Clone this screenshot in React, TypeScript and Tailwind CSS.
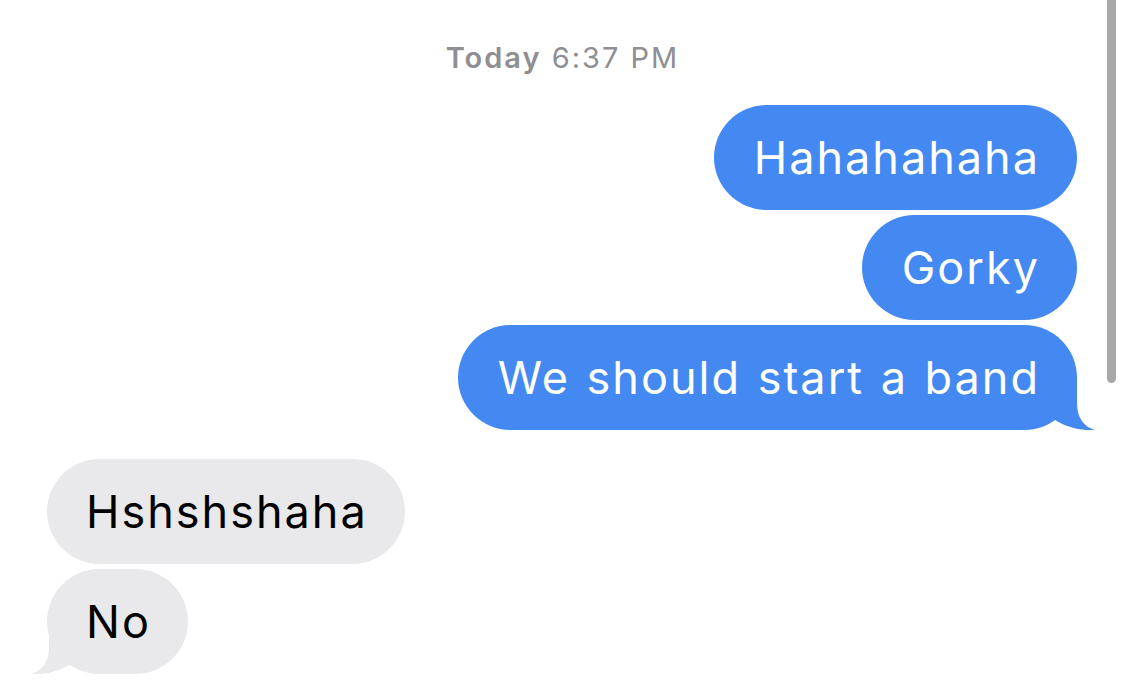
const font = { fontFamily: 'Inter, "Noto Sans", sans-serif' };

function Tail({ side, color }: { side: 'left' | 'right'; color: string }) {
  // tail drawn over the bubble's bottom corner
  return (
    <svg
      viewBox="0 0 71 53"
      className={
        side === 'right'
          ? 'absolute bottom-0 right-[-18px] h-[53px] w-[71px]'
          : 'absolute bottom-0 left-[-16px] h-[53px] w-[71px] -scale-x-100'
      }
    >
      <path d="M53 0 L53 26 C53 41 60 50 71 53 C57 54 42 50 31 43 L0 0 Z" fill={color} />
    </svg>
  );
}

function Sent({ text, tail }: { text: string; tail?: boolean }) {
  return (
    <div className="relative self-end rounded-[53px] bg-[#4489f1] pl-[40px] pr-[37px] h-[105px] flex items-center text-[45px] text-white tracking-[2px] [word-spacing:2px]">
      {tail && <Tail side="right" color="#4489f1" />}
      <span className="relative">{text}</span>
    </div>
  );
}

function Received({ text, tail }: { text: string; tail?: boolean }) {
  return (
    <div className="relative self-start rounded-[53px] bg-[#e9e9eb] pl-[39px] pr-[37px] h-[105px] flex items-center text-[45px] text-black tracking-[2px]">
      {tail && <Tail side="left" color="#e9e9eb" />}
      <span className="relative">{text}</span>
    </div>
  );
}

export default function App() {
  return (
    <div className="relative w-[1125px] h-[691px] overflow-hidden bg-white" style={font}>
      <div className="flex flex-col pt-[40px]">
        <div className="text-center text-[29px] text-[#8e8e93] leading-[36px] tracking-[2px]">
          <span className="font-semibold">Today</span> 6:37 PM
        </div>
        <div className="flex flex-col gap-[5px] pl-[47px] pr-[48px] mt-[29px]">
          <Sent text="Hahahahaha" />
          <Sent text="Gorky" />
          <Sent text="We should start a band" tail />
          <div className="h-[19px]" />
          <Received text="Hshshshaha" />
          <Received text="No" tail />
        </div>
      </div>
      <div className="absolute right-[9px] top-0 h-[383px] w-[9px] rounded-b-full bg-[#a8a8a8]" />
    </div>
  );
}
